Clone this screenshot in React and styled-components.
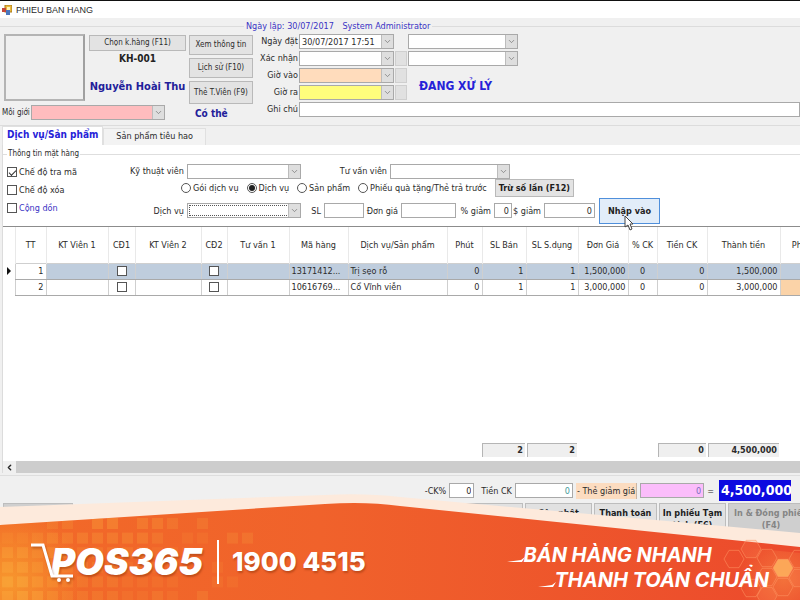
import React, { useState } from 'react';
import styled, { css, createGlobalStyle } from 'styled-components';
import { ChevronDown, ChevronLeft } from 'lucide-react';

const GlobalStyle = createGlobalStyle`
    * {
        box-sizing: border-box;
    }
    body {
        margin: 0;
        background: #f0f0f0;
        color: #2b2b2b;
        font-family: "DejaVu Sans Condensed", "Noto Sans", sans-serif;
        font-size: 9px;
        line-height: 12px;
    }
    button, input, select {
        font: inherit;
        color: inherit;
        margin: 0;
        border-radius: 0;
    }
`;

const Page = styled.div`
    position: relative;
    display: flex;
    flex-direction: column;
    min-height: 100vh;
    overflow: hidden;
`;

const TitleBar = styled.header`
    display: flex;
    align-items: center;
    gap: 4px;
    height: 18px;
    padding-left: 2px;
    background: #fff;
    border-top: 1px solid #111;
`;

const Title = styled.h1`
    margin: 0;
    font-family: "Liberation Sans", sans-serif;
    font-size: 9px;
    font-weight: 400;
`;

const HeaderBox = styled.fieldset`
    display: flex;
    gap: 3px;
    min-width: 0;
    margin: 2px 0 0;
    padding: 2px 0 4px 4px;
    border: solid #dcdcdc;
    border-width: 1px 0;
`;

const HeaderLegend = styled.legend`
    margin-left: 240px;
    padding: 0 2px;
    color: #3a33c4;

    span {
        margin-left: 6px;
    }
`;

const Customer = styled.div`
    display: grid;
    grid-template-columns: 81px 97px;
    grid-template-rows: 67px 15px;
    gap: 4px;
`;

const Photo = styled.div`
    border: 2px solid #b4b4b4;
    border-right-color: #a0a0a0;
`;

const CustomerInfo = styled.div`
    display: flex;
    flex-direction: column;
    align-items: center;
    padding-top: 1px;
    white-space: nowrap;
`;

const CustomerCode = styled.strong`
    margin-top: 2px;
    font-size: 10px;
    color: #222;
`;

const CustomerName = styled.strong`
    margin-top: 14px;
    font-size: 11px;
    line-height: 16px;
    color: #22209a;
`;

const Broker = styled.div`
    grid-column: 1 / 3;
    display: grid;
    grid-template-columns: 29px 134px;
    margin-left: -2px;
    font-size: 8px;
    line-height: 15px;
    white-space: nowrap;
`;

const Button = styled.button`
    padding: 0 2px;
    height: ${props => props.$h || 16}px;
    background: #e3e3e3;
    border: 1px solid #b9b9b9;
    white-space: nowrap;
    font-size: 8px;
    ${props => props.$wide && css`width: 100%;`}
    ${props => props.$bold && css`
        padding: 0 3px;
        font-size: 9px;
        font-weight: bold;
        color: #1c1c1c;
    `}
`;

const CardButtons = styled.div`
    display: flex;
    flex-direction: column;
    gap: 3px;
    width: 64px;
    padding-top: 1px;

    strong {
        padding-left: 6px;
        line-height: 14px;
        font-size: 10px;
        color: #22209a;
    }
`;

const OrderForm = styled.div`
    flex: 1;
    display: grid;
    grid-template-columns: 42px 95px 12px 110px 1fr;
    grid-auto-rows: 15px;
    gap: 2px 1px;
    line-height: 15px;
    text-align: right;
    white-space: nowrap;

    > label {
        grid-column: 1;
    }
`;

const Status = styled.strong`
    grid-column: 4;
    grid-row: 3 / 5;
    padding-left: 11px;
    text-align: left;
    font-size: 12px;
    line-height: 36px;
    color: #2622d8;
`;

const PickButton = styled.button`
    grid-column: 3;
    padding: 0;
    background: #e1e1e1;
    border: 1px solid #cfcfcf;
`;

const TextBox = styled.input`
    width: ${props => props.$w ? props.$w + 'px' : '100%'};
    height: 15px;
    padding: 0 2px;
    background: ${props => props.$bg || '#fff'};
    border: 1px solid #a9a9a9;
    color: ${props => props.$color || 'inherit'};
    text-align: ${props => props.$align || 'left'};
`;

const NoteBox = styled(TextBox)`
    grid-column: 2 / 6;
`;

const SelectWrap = styled.span`
    position: relative;
    display: inline-block;
    width: ${props => props.$w ? props.$w + 'px' : '100%'};
    height: 15px;
    ${props => props.$col && css`grid-column: ${props.$col};`}

    svg {
        position: absolute;
        top: 1px;
        right: 1px;
        width: 12px;
        height: 13px;
        padding: 1px;
        color: #777;
        background: #dedede;
        border-left: 1px solid #bcbcbc;
        pointer-events: none;
    }
`;

const NativeSelect = styled.select`
    display: block;
    appearance: none;
    width: 100%;
    height: 15px;
    padding: 0 2px;
    background: ${props => props.$bg || '#fff'};
    border: 1px solid #a9a9a9;
    ${props => props.$focused && css`
        outline: 1px dotted #555;
        outline-offset: -3px;
    `}
`;

function Select({ id, label, w, col, bg, focused, value = '' }) {
    return (
        <SelectWrap $w={w} $col={col}>
            <NativeSelect id={id} aria-label={label} $bg={bg} $focused={focused}>
                <option>{value}</option>
            </NativeSelect>
            <ChevronDown />
        </SelectWrap>
    );
}

const Tabs = styled.div`
    display: flex;
    align-items: flex-end;
    height: 19px;
    padding-left: 2px;
`;

const Tab = styled.button`
    height: 17px;
    padding: 0 12px 2px;
    background: #f3f3f3;
    border: 1px solid #e0e0e0;
    border-bottom: 0;
    white-space: nowrap;
    ${props => props.$active && css`
        height: 19px;
        padding: 0 4px 2px;
        background: #fff;
        color: #2622d8;
        font-size: 10px;
        font-weight: bold;
    `}
`;

const TabPanel = styled.main`
    display: flex;
    flex-direction: column;
    margin-left: 2px;
    background: #fff;
    border-left: 1px solid #dcdcdc;
`;

const ItemBox = styled.fieldset`
    display: flex;
    min-width: 0;
    margin: 3px 0 0;
    padding: 3px 0 2px 4px;
    border: 0 solid #dedede;
    border-top-width: 1px;
`;

const ItemLegend = styled.legend`
    margin-left: 0;
    padding: 0 1px;
    font-size: 8px;
`;

const Modes = styled.div`
    display: flex;
    flex-direction: column;
    gap: 6px;
    width: 110px;
    padding-top: 3px;
`;

const Check = styled.label`
    display: flex;
    align-items: center;
    gap: 2px;
    height: 12px;
    color: ${props => props.$color || 'inherit'};
    white-space: nowrap;
`;

const CheckInput = styled.input`
    appearance: none;
    display: inline-grid;
    place-items: center;
    flex: none;
    width: 10px;
    height: 10px;
    margin: 0;
    background: #fff;
    border: 1px solid #555;
    border-radius: ${props => props.type === 'radio' ? '50%' : '0'};

    &:checked::after {
        content: "";
        ${props => props.type === 'radio' ? css`
            width: 6px;
            height: 6px;
            border-radius: 50%;
            background: #222;
        ` : css`
            width: 6px;
            height: 3px;
            border: solid #333;
            border-width: 0 0 1px 1px;
            transform: rotate(-45deg);
        `}
    }
`;

const Entry = styled.div`
    flex: 1;
    display: flex;
    flex-direction: column;
    white-space: nowrap;
`;

const EntryRow = styled.div`
    display: flex;
    align-items: center;
    height: ${props => props.$h}px;
`;

const FieldLabel = styled.label`
    flex: none;
    width: ${props => props.$w}px;
    padding-right: 3px;
    text-align: right;
`;

const Kinds = styled.div`
    display: flex;
    gap: 8px;
    margin-right: 8px;
    padding-left: 64px;
`;

const EnterButton = styled.button`
    position: relative;
    width: 61px;
    height: 26px;
    margin-left: 4px;
    padding: 0;
    background: #e2edf9;
    border: 1px solid #4f8fdb;
    color: #222;
    font-weight: bold;
`;

const Cursor = styled.svg`
    position: absolute;
    left: 24px;
    top: 16px;
    width: 10px;
    height: 16px;
    z-index: 1;
`;

const GridArea = styled.section`
    display: flex;
    flex-direction: column;
    height: 235px;
    border-top: 1px solid #8c8c8c;
    overflow: hidden;
`;

const Table = styled.table`
    table-layout: fixed;
    width: calc(100% + 30px);
    border-collapse: collapse;

    th {
        height: 36px;
        padding: 0;
        border-right: 1px solid #e9e9e9;
        font-weight: 400;
        white-space: nowrap;
        text-align: center;
    }
`;

const Row = styled.tr`
    background: ${props => props.$selected ? '#bfcddd' : '#fff'};
`;

const Cell = styled.td`
    height: 16px;
    padding: 0 2px;
    border: 1px solid #cfcfcf;
    border-bottom-color: #a9a9a9;
    text-align: ${props => props.$align || 'right'};
    white-space: nowrap;
    overflow: hidden;
    text-overflow: ellipsis;
    ${props => props.$plain && css`background: #fff;`}
    ${props => props.$bg && css`background: ${props.$bg};`}
    ${props => props.$marker && css`border: 0;`}

    input, svg {
        display: block;
        margin: 0 auto;
    }
    input {
        display: grid;
    }
`;

const Totals = styled.div`
    display: grid;
    grid-template-columns: 477px 43px 50px 77px 48px 71px;
    gap: 2px;
    margin-top: auto;
    padding-bottom: 4px;

    output {
        height: 14px;
        padding: 0 2px;
        background: #efefef;
        border: solid #b5b5b5;
        border-width: 1px 0 0 1px;
        text-align: right;
        font-weight: bold;
    }
`;

const ScrollBar = styled.div`
    display: flex;
    height: 12px;
    background: #cdcdcd;

    button {
        display: grid;
        place-items: center;
        width: 13px;
        padding: 0;
        background: #f0f0f0;
        border: 0;
    }
`;

const Payment = styled.div`
    display: flex;
    align-items: center;
    justify-content: flex-end;
    gap: 3px;
    height: 30px;
    margin-top: 2px;
    padding-right: 9px;
    border-top: 1px solid #dedede;
    white-space: nowrap;
`;

const MoneyLabel = styled.label`
    margin-left: 4px;
`;

const CardLabel = styled.label`
    padding: 0 1px;
    line-height: 16px;
    background: #fcdcc0;
    border-right: 1px solid #c9b5a3;
`;

const GrandTotal = styled.output`
    width: 72px;
    height: 21px;
    margin-left: 2px;
    padding-left: 2px;
    overflow: hidden;
    background: #0d0ae0;
    color: #fff;
    font-size: 14px;
    line-height: 21px;
    font-weight: bold;
`;

const Actions = styled.div`
    display: flex;
    gap: 2px;
    margin: -2px -14px 0 3px;
`;

const ActionButton = styled.button`
    display: flex;
    justify-content: center;
    flex: none;
    width: ${props => props.$w}px;
    height: 34px;
    padding: 3px 0;
    background: #e1e1e1;
    border: 1px solid #bdbdbd;
    color: #1c1c1c;
    font-weight: bold;
    line-height: 12px;

    &:first-child {
        margin-right: auto;
    }
    &:disabled {
        background: #cfcfcf;
        color: #858585;
    }
`;

const Banner = styled.footer`
    position: absolute;
    left: 0;
    right: 0;
    bottom: 0;
    height: 106px;
    display: flex;
    align-items: flex-end;
    justify-content: space-between;
    color: #fff;
    text-shadow: 1px 2px 2px rgba(120, 40, 0, 0.4);
`;

const Wave = styled.svg`
    position: absolute;
    inset: 0;
    width: 100%;
    height: 100%;
`;

const Pattern = styled.svg`
    position: absolute;
    bottom: 0;
    ${props => props.$side}: 0;
`;

const Contact = styled.div`
    position: relative;
    display: flex;
    align-items: center;
    height: 76px;
    padding-left: 31px;
`;

const Cart = styled.svg`
    width: 44px;
    height: 42px;
    filter: drop-shadow(1px 2px 1px rgba(120, 40, 0, 0.4));
`;

const Brand = styled.strong`
    margin-left: -24px;
    font-family: Inter, sans-serif;
    font-size: 37px;
    font-style: italic;
    font-weight: 900;
    line-height: 44px;
`;

const Phone = styled.a`
    margin-left: 14px;
    padding-left: 13px;
    border-left: 2px solid #fff;
    color: #fff;
    font-family: Inter, sans-serif;
    font-size: 26px;
    font-weight: 800;
    line-height: 44px;
    text-decoration: none;
`;

const Slogan = styled.p`
    position: relative;
    margin: 0;
    padding: 0 31px 7px 0;
    font-family: Inter, sans-serif;
    font-size: 20px;
    font-style: italic;
    font-weight: 700;
    line-height: 25px;
    white-space: nowrap;
    text-shadow: none;

    span {
        display: flex;
        align-items: center;
    }
    span + span {
        margin-left: 31px;
    }
`;

const Dash = styled.svg`
    width: 18px;
    height: 14px;
    margin-right: -2px;
`;

const columns = [
    ['', 12], ['TT', 31], ['KT Viên 1', 62], ['CĐ1', 27], ['KT Viên 2', 66], ['CĐ2', 26],
    ['Tư vấn 1', 62], ['Mã hàng', 59], ['Dịch vụ/Sản phẩm', 99], ['Phút', 35], ['SL Bán', 44],
    ['SL S.dụng', 52], ['Đơn Giá', 50], ['% CK', 29], ['Tiền CK', 50], ['Thành tiền', 73], ['Phí CK', null],
];

const items = [
    { code: '13171412...', name: 'Trị sẹo rỗ', price: '1,500,000' },
    { code: '10616769...', name: 'Cổ Vĩnh viễn', price: '3,000,000' },
];

const kinds = ['Gói dịch vụ', 'Dịch vụ', 'Sản phẩm', 'Phiếu quà tặng/Thẻ trả trước'];

// opacity of the squares, one string per row, 0 = hidden
const squares = [
    '00033055044303',
    '22344444443022033',
    '5534333333222',
    '66433333222200200',
    '7754333322220022',
    '676433332232030',
];

const hexPoints = (cx, cy, r) => [0, 60, 120, 180, 240, 300]
    .map(a => `${cx + r * Math.cos(a * Math.PI / 180)},${cy + r * Math.sin(a * Math.PI / 180)}`)
    .join(' ');

const hexes = [
    [34, 43, 0], [51, 33, 1], [67, 42, 0], [83, 52, 2], [99, 43, 0],
    [67, 61, 0], [51, 72, 0], [83, 71, 0], [99, 62, 1], [67, 80, 1],
];

function AppIcon() {
    return (
        <svg width="10" height="10" viewBox="0 0 10 10" aria-hidden="true">
            <rect x="3" y="0" width="7" height="7" fill="#e9b83c" stroke="#a97a19" />
            <rect x="0" y="3" width="4" height="4" fill="#c4483a" />
            <rect x="4" y="5" width="4" height="5" fill="#4a76bd" />
            <rect x="5" y="2" width="3" height="3" fill="#fff2b5" />
        </svg>
    );
}

function OrderHeader() {
    return (
        <HeaderBox>
            <HeaderLegend>Ngày lập: 30/07/2017 <span>System Administrator</span></HeaderLegend>
            <Customer>
                <Photo />
                <CustomerInfo>
                    <Button $wide>Chọn k.hàng (F11)</Button>
                    <CustomerCode>KH-001</CustomerCode>
                    <CustomerName>Nguyễn Hoài Thu</CustomerName>
                </CustomerInfo>
                <Broker>
                    <label htmlFor="broker">Môi giới</label>
                    <Select id="broker" bg="#ffbcbe" />
                </Broker>
            </Customer>
            <CardButtons>
                <Button $h={20}>Xem thông tin</Button>
                <Button $h={20}>Lịch sử (F10)</Button>
                <Button $h={23}>Thẻ T.Viên (F9)</Button>
                <strong>Có thẻ</strong>
            </CardButtons>
            <OrderForm>
                <label htmlFor="booked">Ngày đặt</label>
                <Select id="booked" value="30/07/2017 17:51" />
                <Select label="Người đặt" col={4} />
                <label htmlFor="confirmed">Xác nhận</label>
                <Select id="confirmed" />
                <PickButton aria-label="Chọn xác nhận" />
                <Select label="Người xác nhận" col={4} />
                <label htmlFor="timeIn">Giờ vào</label>
                <Select id="timeIn" bg="#ffdcbc" />
                <PickButton aria-label="Chọn giờ vào" />
                <Status>ĐANG XỬ LÝ</Status>
                <label htmlFor="timeOut">Giờ ra</label>
                <Select id="timeOut" bg="#fffd7c" />
                <PickButton aria-label="Chọn giờ ra" />
                <label htmlFor="note">Ghi chú</label>
                <NoteBox id="note" />
            </OrderForm>
        </HeaderBox>
    );
}

function ItemEntry() {
    const [kind, setKind] = useState('Dịch vụ');

    return (
        <ItemBox>
            <ItemLegend>Thông tin mặt hàng</ItemLegend>
            <Modes>
                <Check><CheckInput type="checkbox" defaultChecked />Chế độ tra mã</Check>
                <Check><CheckInput type="checkbox" />Chế độ xóa</Check>
                <Check $color="#3a33c4"><CheckInput type="checkbox" />Cộng dồn</Check>
            </Modes>
            <Entry>
                <EntryRow $h={16}>
                    <FieldLabel $w={70} htmlFor="staff">Kỹ thuật viên</FieldLabel>
                    <Select id="staff" w={114} />
                    <FieldLabel $w={89} htmlFor="adviser">Tư vấn viên</FieldLabel>
                    <Select id="adviser" w={120} />
                </EntryRow>
                <EntryRow $h={18}>
                    <Kinds>
                        {kinds.map(name => (
                            <Check key={name}>
                                <CheckInput
                                    type="radio"
                                    name="kind"
                                    checked={kind === name}
                                    onChange={() => setKind(name)}
                                />
                                {name}
                            </Check>
                        ))}
                    </Kinds>
                    <Button $h={18} $bold>Trừ số lần (F12)</Button>
                </EntryRow>
                <EntryRow $h={27}>
                    <FieldLabel $w={70} htmlFor="service">Dịch vụ</FieldLabel>
                    <Select id="service" w={114} focused />
                    <FieldLabel $w={23} htmlFor="qty">SL</FieldLabel>
                    <TextBox id="qty" $w={40} />
                    <FieldLabel $w={37} htmlFor="price">Đơn giá</FieldLabel>
                    <TextBox id="price" $w={55} />
                    <FieldLabel $w={38} htmlFor="percent">% giảm</FieldLabel>
                    <TextBox id="percent" $w={18} $align="right" defaultValue="0" />
                    <FieldLabel $w={32} htmlFor="money">$ giảm</FieldLabel>
                    <TextBox id="money" $w={51} $align="right" defaultValue="0" />
                    <EnterButton>
                        Nhập vào
                        <Cursor viewBox="0 0 10 16" aria-hidden="true">
                            <path d="M1 1v11l3-2 2 5 2-1-2-5h3z" fill="#fff" stroke="#444" />
                        </Cursor>
                    </EnterButton>
                </EntryRow>
            </Entry>
        </ItemBox>
    );
}

function ItemTable() {
    return (
        <GridArea>
            <Table>
                <colgroup>
                    {columns.map(([name, width]) => <col key={name} width={width || undefined} />)}
                </colgroup>
                <thead>
                    <tr>{columns.map(([name]) => <th key={name}>{name}</th>)}</tr>
                </thead>
                <tbody>
                    {items.map((item, index) => (
                        <Row key={item.code} $selected={index === 0}>
                            <Cell $marker $plain>
                                {index === 0 &&
                                    <svg width="4" height="8" viewBox="0 0 4 8"><path d="M0 0l4 4-4 4z" fill="#111" /></svg>
                                }
                            </Cell>
                            <Cell $plain>{index + 1}</Cell>
                            <Cell />
                            <Cell><CheckInput type="checkbox" aria-label="CĐ1" /></Cell>
                            <Cell />
                            <Cell><CheckInput type="checkbox" aria-label="CĐ2" /></Cell>
                            <Cell />
                            <Cell $align="left">{item.code}</Cell>
                            <Cell $align="left">{item.name}</Cell>
                            <Cell>0</Cell>
                            <Cell>1</Cell>
                            <Cell>1</Cell>
                            <Cell>{item.price}</Cell>
                            <Cell $align="center">0</Cell>
                            <Cell>0</Cell>
                            <Cell>{item.price}</Cell>
                            <Cell $bg={index === 1 ? '#fbd3a8' : undefined} />
                        </Row>
                    ))}
                </tbody>
            </Table>
            <Totals>
                <span />
                <output>2</output>
                <output>2</output>
                <span />
                <output>0</output>
                <output>4,500,000</output>
            </Totals>
        </GridArea>
    );
}

function PromoBanner() {
    return (
        <Banner>
            <Wave viewBox="0 0 800 106" preserveAspectRatio="none" aria-hidden="true">
                <defs>
                    <linearGradient id="orange">
                        <stop offset="0" stopColor="#f26a28" />
                        <stop offset="0.4" stopColor="#f0622b" />
                        <stop offset="1" stopColor="#ec4a2c" />
                    </linearGradient>
                </defs>
                <path d="M0 13L325 1Q365 -1 400 3L800 39V106H0z" fill="#fdeadc" />
                <path d="M0 31L325 10Q365 7 400 12L800 53V106H0z" fill="url(#orange)" />
            </Wave>
            <Pattern $side="left" width="260" height="84" viewBox="0 0 260 84" aria-hidden="true">
                <defs>
                    <radialGradient id="glow" gradientUnits="userSpaceOnUse" cx="8" cy="66" r="75">
                        <stop offset="0" stopColor="#f9a62f" stopOpacity="0.75" />
                        <stop offset="1" stopColor="#f9a62f" stopOpacity="0" />
                    </radialGradient>
                    <clipPath id="underWave">
                        <path d="M0 9L140 0H260V84H0z" />
                    </clipPath>
                </defs>
                <g clipPath="url(#underWave)">
                    <rect width="260" height="84" fill="url(#glow)" />
                    {squares.map((line, row) => line.split('').map((level, col) => (
                        <rect
                            key={row + '-' + col}
                            x={2 + col * 15}
                            y={2 + row * 14.6}
                            width="11"
                            height="11"
                            fill="#fbb040"
                            opacity={level * 0.06}
                        />
                    )))}
                </g>
            </Pattern>
            <Pattern $side="right" width="100" height="84" viewBox="0 0 100 84" aria-hidden="true">
                <defs>
                    <radialGradient id="hexGlow" gradientUnits="userSpaceOnUse" cx="84" cy="62" r="45">
                        <stop offset="0" stopColor="#fb9a4a" stopOpacity="0.5" />
                        <stop offset="1" stopColor="#fb9a4a" stopOpacity="0" />
                    </radialGradient>
                </defs>
                <path d="M0 27L100 37V84H0z" fill="url(#hexGlow)" />
                {hexes.map(([x, y, level]) => (
                    <polygon
                        key={x + '-' + y}
                        points={hexPoints(x, y, 10)}
                        fill={level === 2 ? '#fdae5c' : '#ff8a5a'}
                        fillOpacity={[0, 0.2, 0.9][level]}
                        stroke="#ff9a66"
                        strokeOpacity="0.5"
                    />
                ))}
            </Pattern>
            <Contact>
                <Cart viewBox="0 0 44 42" fill="none" stroke="#fff" strokeWidth="3" aria-hidden="true">
                    <path d="M0 4h12l9 31h21" />
                    <circle cx="28" cy="39" r="2" fill="#fff" stroke="none" />
                    <circle cx="37" cy="39" r="2" fill="#fff" stroke="none" />
                </Cart>
                <Brand>POS365</Brand>
                <Phone href="tel:19004515">1900 4515</Phone>
            </Contact>
            <Slogan>
                <span><Dash viewBox="0 0 18 14"><path d="M0 13L14 11L18 8L15 13z" fill="#fff" /></Dash>BÁN HÀNG NHANH</span>
                <span><Dash viewBox="0 0 18 14"><path d="M0 13L14 11L18 8L15 13z" fill="#fff" /></Dash>THANH TOÁN CHUẨN</span>
            </Slogan>
        </Banner>
    );
}

function App() {
    return (
        <Page>
            <GlobalStyle />
            <TitleBar>
                <AppIcon />
                <Title>PHIEU BAN HANG</Title>
            </TitleBar>
            <OrderHeader />
            <Tabs>
                <Tab $active>Dịch vụ/Sản phẩm</Tab>
                <Tab>Sản phẩm tiêu hao</Tab>
            </Tabs>
            <TabPanel>
                <ItemEntry />
                <ItemTable />
                <ScrollBar>
                    <button aria-label="Cuộn trái"><ChevronLeft size={9} strokeWidth={4} /></button>
                </ScrollBar>
            </TabPanel>
            <Payment>
                <label htmlFor="ck">-CK%</label>
                <TextBox id="ck" $w={25} $align="right" defaultValue="0" />
                <MoneyLabel htmlFor="ckMoney">Tiền CK</MoneyLabel>
                <TextBox id="ckMoney" $w={58} $align="right" $color="#3f9a9a" defaultValue="0" />
                <CardLabel htmlFor="voucher">- Thẻ giảm giá</CardLabel>
                <TextBox id="voucher" $w={64} $align="right" $bg="#fbbdfb" $color="#7a6fc0" defaultValue="0" />
                <span>=</span>
                <GrandTotal>4,500,000</GrandTotal>
            </Payment>
            <Actions>
                <ActionButton $w={70} disabled />
                <ActionButton $w={64} />
                <ActionButton $w={67}>Cập nhật</ActionButton>
                <ActionButton $w={63}>Thanh toán</ActionButton>
                <ActionButton $w={67}>In phiếu Tạm tính (F6)</ActionButton>
                <ActionButton $w={86} disabled>In & Đóng phiếu (F4)</ActionButton>
            </Actions>
            <PromoBanner />
        </Page>
    );
}

export default App;
